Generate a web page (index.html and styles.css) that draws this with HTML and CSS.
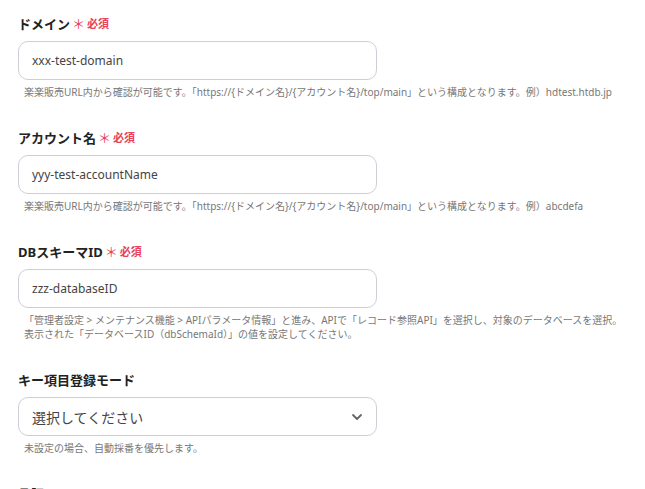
FILE: index.html
```html
<!DOCTYPE html>
<html lang="ja">
<head>
<meta charset="utf-8">
<link rel="stylesheet" href="styles.css">
</head>
<body>
<form class="form">
  <div class="field">
    <div class="label">ドメイン<span class="req"><span class="ast">＊</span>必須</span></div>
    <div class="input">xxx-test-domain</div>
    <p class="help">楽楽販売URL内から確認が可能です。「https://{ドメイン名}/{アカウント名}/top/main」という構成となります。例）hdtest.htdb.jp</p>
  </div>
  <div class="field">
    <div class="label">アカウント名<span class="req"><span class="ast">＊</span>必須</span></div>
    <div class="input">yyy-test-accountName</div>
    <p class="help">楽楽販売URL内から確認が可能です。「https://{ドメイン名}/{アカウント名}/top/main」という構成となります。例）abcdefa</p>
  </div>
  <div class="field">
    <div class="label">DBスキーマID<span class="req"><span class="ast">＊</span>必須</span></div>
    <div class="input">zzz-databaseID</div>
    <p class="help">「管理者設定 &gt; メンテナンス機能 &gt; APIパラメータ情報」と進み、APIで「レコード参照API」を選択し、対象のデータベースを選択。<br>表示された「データベースID（dbSchemaId）」の値を設定してください。</p>
  </div>
  <div class="field">
    <div class="label">キー項目登録モード</div>
    <div class="input select"><span>選択してください</span>
      <svg class="chev" width="12" height="8" viewBox="0 0 12 8"><path d="M2 2 L6 6 L10 2" fill="none" stroke="#666" stroke-width="1.8" stroke-linecap="round" stroke-linejoin="round"/></svg>
    </div>
    <p class="help">未設定の場合、自動採番を優先します。</p>
  </div>
  <div class="field">
    <div class="label">承認フロー ID</div>
  </div>
</form>
</body>
</html>
```
FILE: styles.css
```css
html, body {
  margin: 0;
  padding: 0;
  background: #fff;
}
body {
  font-family: "Noto Sans", "Noto Sans CJK JP", sans-serif;
  color: #333;
  overflow: hidden;
}
.form {
  padding: 14px 0 0 18px;
  display: flex;
  flex-direction: column;
  gap: 29px;
}
.field {
  display: flex;
  flex-direction: column;
}
.label {
  font-size: 13px;
  font-weight: bold;
  line-height: 20px;
  color: #222;
  display: flex;
  align-items: center;
}
.req {
  color: #e8415a;
  font-size: 11px;
  font-weight: bold;
  display: inline-flex;
  align-items: center;
}
.ast {
  font-size: 13px;
  font-weight: normal;
  margin-left: 2px;
  margin-right: 2px;
}
.input {
  margin-top: 7px;
  box-sizing: border-box;
  width: 359px;
  height: 39px;
  border: 1px solid #ccd0d6;
  border-radius: 10px;
  padding: 0 13px;
  font-size: 12px;
  color: #444;
  display: flex;
  align-items: center;
}
.select {
  justify-content: space-between;
  font-size: 14px;
}
.help {
  margin: 5px 0 0 6px;
  font-size: 10px;
  line-height: 14px;
  color: #777;
  white-space: nowrap;
}
```
